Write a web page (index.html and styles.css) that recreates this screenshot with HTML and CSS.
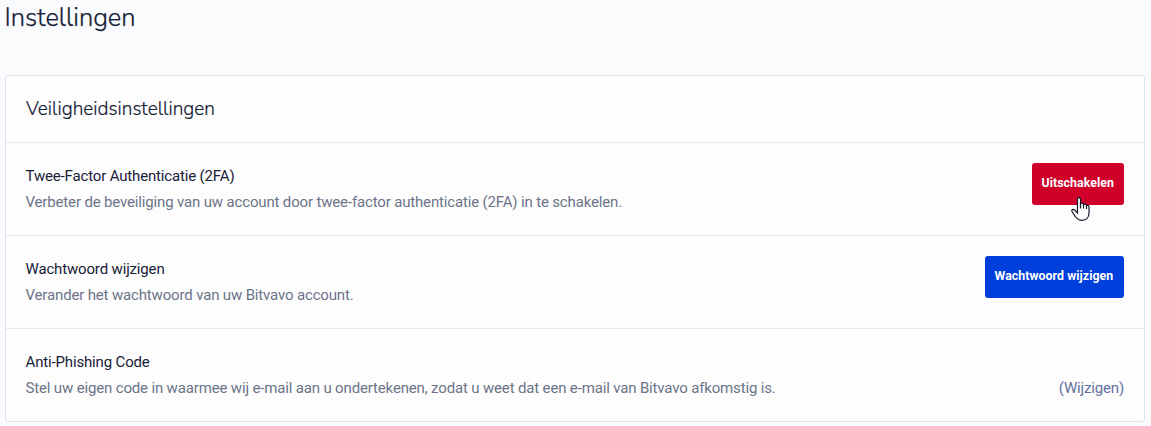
FILE: index.html
```html
<!DOCTYPE html>
<html lang="nl">
<head>
<meta charset="utf-8">
<title>Instellingen</title>
<link rel="stylesheet" href="styles.css">
</head>
<body>
<main class="page">
  <h1 class="page-title">Instellingen</h1>
  <section class="card">
    <h2 class="card-title">Veiligheidsinstellingen</h2>
    <div class="row">
      <div class="info">
        <h3>Twee-Factor Authenticatie (2FA)</h3>
        <p>Verbeter de beveiliging van uw account door twee-factor authenticatie (2FA) in te schakelen.</p>
      </div>
      <button class="btn danger">Uitschakelen</button>
    </div>
    <div class="row">
      <div class="info">
        <h3>Wachtwoord wijzigen</h3>
        <p>Verander het wachtwoord van uw Bitvavo account.</p>
      </div>
      <button class="btn primary">Wachtwoord wijzigen</button>
    </div>
    <div class="row">
      <div class="info">
        <h3>Anti-Phishing Code</h3>
        <p>Stel uw eigen code in waarmee wij e-mail aan u ondertekenen, zodat u weet dat een e-mail van Bitvavo afkomstig is.</p>
      </div>
      <a class="edit">(Wijzigen)</a>
    </div>
  </section>
</main>
<svg class="cursor" viewBox="0 0 19 25" width="19" height="25"><path d="M6.500 13.500V2.200Q6.500.7 8 .7T9.500 2.200V6.500Q12.300 5.500 12.500 7.500 15.300 6.500 15.500 8.500 18 7.800 18 10V16C18 20.500 15 23.300 11 23.300 6.500 23.300 4.500 20.500 3 17.500L1 14.500C.2 12.800 2.300 11.800 3.500 12.800L6.500 16Z" fill="#fff" stroke="#15152b" stroke-width="1.200"/><path d="M9.500 6v5.500M12.500 7.500v4M15.500 8.500v3.500" stroke="#15152b" stroke-width="1.200" fill="none"/></svg>
</body>
</html>
```
FILE: styles.css
```css
* { box-sizing: border-box; margin: 0; }
body { background: #fafbfd; font: 15px/26px Roboto, sans-serif; letter-spacing: -.157px; color: #172136; height: 426px; overflow: hidden; }
.page { padding: 0 6px 0 5px; }
.page-title { height: 75px; padding-top: 1px; font: 300 25.500px/34px Nunito, Lato, sans-serif; letter-spacing: -.03px; text-indent: -.5px; -webkit-text-stroke: .25px; }
.card { height: 347px; background: #fdfdfe; border: 1px solid #dfe3ec; border-radius: 3px; }
.card-title { height: 66px; padding: 1px 0 0 20px; font: 300 19px/65px Nunito, Lato, sans-serif; letter-spacing: 0; -webkit-text-stroke: .2px; }
.row { height: 93px; border-top: 1px solid #e7eaf1; padding: 20px 20px 20px 19.500px; display: flex; justify-content: space-between; align-items: flex-start; }
.info h3 { font: inherit; }
.info p { color: #6c7488; }
.edit { margin-top: 26px; color: #6470a0; }
.btn { height: 42px; padding: 0 9px 2px 9.500px; border: 0; border-radius: 3px; color: #fff; font: 700 12.300px/40px Roboto, sans-serif; letter-spacing: .07px; text-align: left; white-space: nowrap; }
.danger { width: 92px; background: #d0002b; }
.primary { width: 139px; background: #003fdc; }
.cursor { position: absolute; left: 1071px; top: 197px; }
```
